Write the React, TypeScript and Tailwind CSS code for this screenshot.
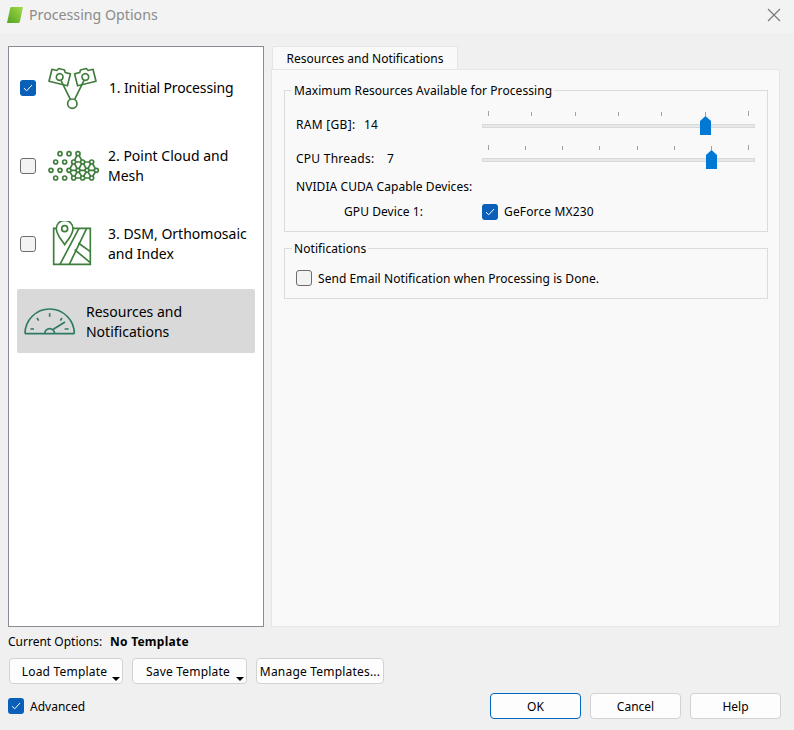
import React from "react";

const F = "font-['Noto_Sans','Open_Sans',sans-serif]";

function Check({ on = false }: { on?: boolean }) {
  return on ? (
    <span className="flex h-4 w-4 shrink-0 items-center justify-center rounded-[3px] bg-[#0a5fb8]">
      <svg width="10" height="8" viewBox="0 0 10 8" fill="none">
        <path d="M1 4.2 L3.7 6.8 L9 1" stroke="#fff" strokeWidth="1" />
      </svg>
    </span>
  ) : (
    <span className="block h-4 w-4 shrink-0 rounded-[3px] border border-[#6c6c6c] bg-[#f3f3f3]" />
  );
}

function Icon1() {
  return (
    <svg className="ml-[10.67px] shrink-0" width="51.67" height="46.67" viewBox="110 29 155 140" fill="none" stroke="#3f7d3c" strokeWidth="5">
      <g transform="rotate(14 148 65)">
        <path d="M120 48 H135 L139 41 H157 L161 48 H177 V85 H120 Z" strokeLinejoin="round" />
        <circle cx="148" cy="65" r="10" />
      </g>
      <g transform="rotate(-14 225 65)">
        <path d="M196 48 H212 L216 41 H234 L238 48 H253 V85 H196 Z" strokeLinejoin="round" />
        <circle cx="225" cy="65" r="10" />
      </g>
      <circle cx="186" cy="145" r="14" />
      <path d="M152 75 L180 132 M221 75 L193 132" />
    </svg>
  );
}

const dots: [number, number][] = [
  [149, 71], [176, 71], [203, 71], [136, 96], [163, 96], [190, 96], [217, 96], [244, 96],
  [122, 121], [149, 121], [176, 121], [203, 121], [230, 121], [258, 121],
  [136, 144], [163, 144], [190, 144], [217, 144], [244, 144],
];

function Icon2() {
  return (
    <svg className="ml-[10.67px] shrink-0" width="53.33" height="40" viewBox="110 48 160 120" fill="none" stroke="#3f7d3c" strokeWidth="5">
      <path d="M203 71 L190 96 L176 121 L190 144 L203 121 L217 144 L230 121 L244 144 L258 121 L244 96 L230 121 L217 96 L203 121 L190 96 H244 M203 71 L217 96 M176 121 H258 M190 144 H244" strokeLinejoin="round" />
      {dots.map(([x, y]) => (
        <circle key={`${x}-${y}`} cx={x} cy={y} r="6" fill="#fff" />
      ))}
    </svg>
  );
}

function Icon3() {
  return (
    <svg className="ml-[14px] shrink-0" width="43.33" height="46.67" viewBox="120 32 130 140" fill="none" stroke="#3f7d3c" strokeWidth="5">
      <path d="M131 54 V162 H241 V54 Z" />
      <path d="M207 54 L150 162 M230 54 L178 162 M194 118 L241 157 M205 98 L241 124" />
      <path d="M164 103 C152 85 139 72 139 55 A25 25 0 0 1 189 55 C189 72 176 85 164 103 Z" fill="#fff" />
      <circle cx="164" cy="55" r="9" />
    </svg>
  );
}

function Icon4() {
  return (
    <svg className="ml-[6.33px] shrink-0" width="55" height="33.33" viewBox="40 28 165 100" fill="none" stroke="#2f7a64" strokeWidth="5">
      <path d="M46 117 H194 M46 117 A74 74 0 0 1 194 117" />
      <path d="M120 56 V66 M82 70 L87 78 M157 70 L152 78 M62 103 H73 M165 103 H177" />
      <path d="M105 117 A15 15 0 0 1 135 117 M131 104 L166 82" />
    </svg>
  );
}

function Slider({ count, thumb }: { count: number; thumb: string }) {
  return (
    <div className="relative h-6 w-[273px]">
      <div className="flex h-[5px] items-end justify-between px-[6px]">
        {Array.from({ length: count }).map((_, i) => (
          <span key={i} className={`w-px bg-[#a3a39c] ${i === 0 || i === count - 1 ? "h-[5px]" : "h-1"}`} />
        ))}
      </div>
      <div className="mt-2 h-1 border border-[#d8dad9] bg-[#e7e8e8]" />
      <svg className={`absolute top-[5px] ${thumb}`} width="11" height="19" viewBox="0 0 11 19">
        <path d="M5.5 0 L11 5 V19 H0 V5 Z" fill="#0078d4" />
      </svg>
    </div>
  );
}

function Btn({ children, cls, menu = false }: { children: React.ReactNode; cls: string; menu?: boolean }) {
  return (
    <div className={`relative flex h-[26px] items-center justify-center rounded-[4px] border border-[#d2d2d2] bg-[#fdfdfd] pt-px text-[12px] text-black ${cls}`}>
      {children}
      {menu && <span className="absolute bottom-[2px] right-[2px] h-0 w-0 border-x-[4px] border-t-[4px] border-x-transparent border-t-black" />}
    </div>
  );
}

function NavRow({ on, icon, text }: { on: boolean; icon: React.ReactNode; text: React.ReactNode }) {
  return (
    <div className="flex h-[78px] items-center pl-[3px]">
      <Check on={on} />
      <div className="w-[72px] shrink-0">{icon}</div>
      <div className="text-[14px] leading-[20px]">{text}</div>
    </div>
  );
}

export default function App() {
  return (
    <div className={`${F} flex h-[730px] w-[794px] flex-col overflow-hidden bg-[#f0f0f0] text-black`}>
      <div className="flex h-[33px] items-center justify-between bg-[#f3f3f3] pb-[3px] pl-[6px] pr-[13px]">
        <div className="flex items-center">
          <svg width="18" height="18" viewBox="0 0 18 18">
            <defs>
              <linearGradient id="leaf" x1="0" y1="1" x2="1" y2="0">
                <stop offset="0" stopColor="#4fa41f" />
                <stop offset="1" stopColor="#a6d94a" />
              </linearGradient>
            </defs>
            <path d="M5 1 H17 L14 15 C14 16.5 13 17 12 17 H1 L4 3 C4 2 4.5 1 5 1 Z" fill="url(#leaf)" />
          </svg>
          <span className="ml-[5px] text-[14.2px] text-[#8b8b8b]">Processing Options</span>
        </div>
        <svg width="14" height="14" viewBox="0 0 14 14" stroke="#767676" strokeWidth="1.1">
          <path d="M1 1 L13 13 M13 1 L1 13" />
        </svg>
      </div>

      <div className="ml-2 mt-[13px] flex gap-[7px]">
        <div className="h-[581px] w-[256px] border border-[#8b8b95] bg-white px-2 pt-[2px]">
          <NavRow on icon={<Icon1 />} text={<span className="ml-px tracking-[-0.15px]">1. Initial Processing</span>} />
          <NavRow on={false} icon={<Icon2 />} text={<>2. Point Cloud and<br />Mesh</>} />
          <NavRow on={false} icon={<Icon3 />} text={<>3. DSM, Orthomosaic<br />and Index</>} />
          <div className="mt-[6px] flex h-16 items-center rounded-[2px] bg-[#d9d9d9]">
            <Icon4 />
            <div className="ml-[7.67px] pt-px text-[14px] leading-[20px]">Resources and<br />Notifications</div>
          </div>
        </div>

        <div className="flex w-[509px] flex-col text-[12px]">
          <div className="ml-px flex h-[24px] w-[186px] items-center justify-center rounded-t-[2px] border border-b-0 border-[#e5e5e5] bg-[#f9f9f9] pt-px">
            Resources and Notifications
          </div>
          <div className="-mt-px h-[558px] border border-[#e5e5e5] bg-[#f9f9f9] pl-3 pt-5 tracking-[0.07px]">
            <div className="relative h-[142px] w-[484px] border border-[#dcdcdc] pl-[11px] pt-5">
              <span className="absolute -top-[9px] left-[7px] bg-[#f9f9f9] px-[2px] leading-[18px]">Maximum Resources Available for Processing</span>
              <div className="grid grid-cols-[186px_273px] items-start">
                <div className="flex h-6 items-center pt-[4px]">
                  <span className="w-[68px] tracking-[0.3px]">RAM [GB]:</span>
                  <span>14</span>
                </div>
                <Slider count={7} thumb="left-[218px]" />
              </div>
              <div className="mt-[10px] grid grid-cols-[186px_273px] items-start">
                <div className="flex h-6 items-center pt-[4px]">
                  <span className="w-[91px] tracking-[0.25px]">CPU Threads:</span>
                  <span>7</span>
                </div>
                <Slider count={8} thumb="left-[224px]" />
              </div>
              <div className="mt-[9px] h-4 leading-[18px]">NVIDIA CUDA Capable Devices:</div>
              <div className="mt-[9px] grid h-4 grid-cols-[186px_273px] items-center">
                <span className="pl-12 pt-px leading-[16px]">GPU Device 1:</span>
                <div className="flex items-center gap-[6px]">
                  <Check on />
                  <span className="pt-px leading-[16px] tracking-[0.15px]">GeForce MX230</span>
                </div>
              </div>
            </div>
            <div className="relative mt-4 flex h-[51px] w-[484px] items-center border border-[#dcdcdc] pl-[11px] pt-[9px]">
              <span className="absolute -top-[9px] left-[7px] bg-[#f9f9f9] px-[2px] leading-[18px]">Notifications</span>
              <Check />
              <span className="ml-[6px] pt-[2px]">Send Email Notification when Processing is Done.</span>
            </div>
          </div>
        </div>
      </div>

      <div className="ml-2 mt-[7px] flex h-4 items-center text-[12px] leading-[18px]">
        <span className="w-[102px]">Current Options:</span>
        <span className="font-bold tracking-[0.25px]">No Template</span>
      </div>
      <div className="ml-[9px] mt-2 flex gap-[9px] tracking-[0.2px]">
        <Btn cls="w-[114px] pr-[3px]" menu>Load Template</Btn>
        <Btn cls="w-[115px] pr-[3px]" menu>Save Template</Btn>
        <Btn cls="w-[128px]">Manage Templates...</Btn>
      </div>
      <div className="ml-2 mt-[9px] flex items-center">
        <div className="flex items-center gap-[6px] text-[12px]">
          <Check on />
          <span className="pt-[2px]">Advanced</span>
        </div>
        <div className="ml-auto mr-[13px] flex gap-[9px]">
          <Btn cls="w-[91px] !border-[#0067c0]">OK</Btn>
          <Btn cls="w-[91px]">Cancel</Btn>
          <Btn cls="w-[91px]">Help</Btn>
        </div>
      </div>
    </div>
  );
}
